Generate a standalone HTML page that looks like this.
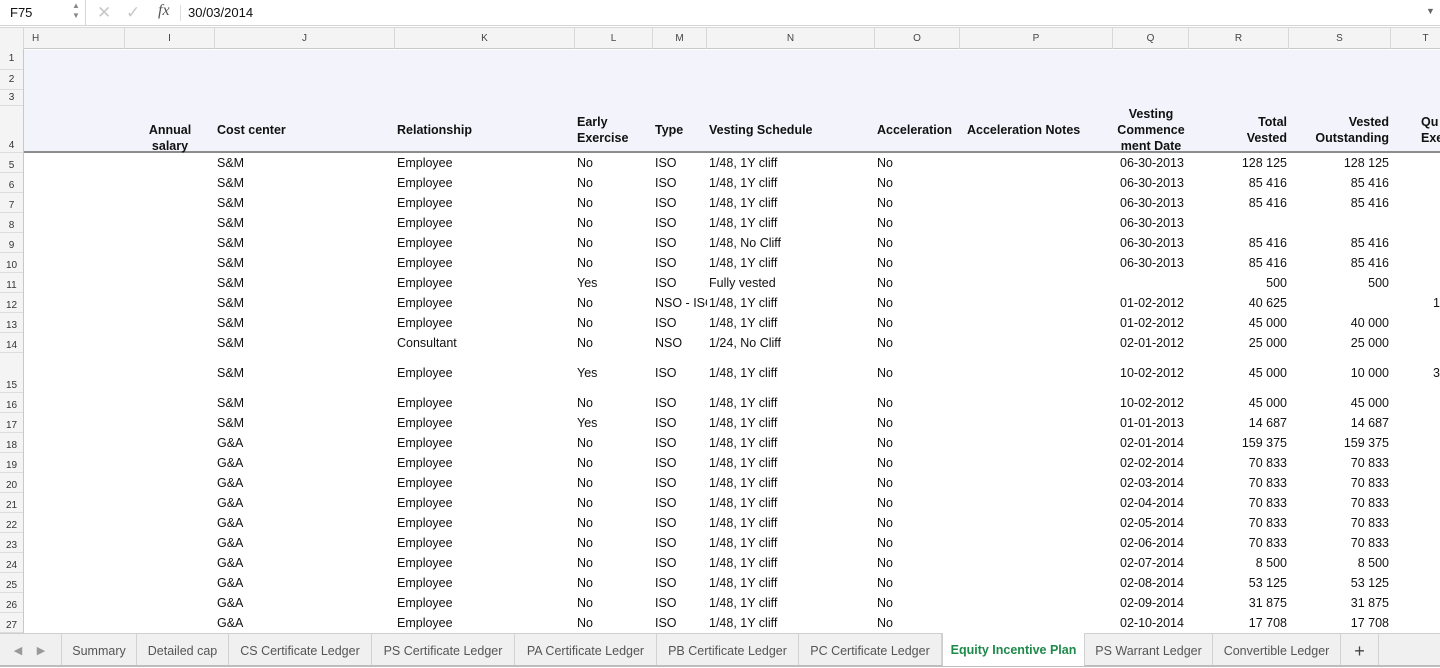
<!DOCTYPE html>
<html><head><meta charset="utf-8"><style>
*{margin:0;padding:0;box-sizing:border-box}
body{width:1440px;height:667px;overflow:hidden;background:#fff;font-family:"Liberation Sans",Arial,sans-serif;font-size:12.5px;color:#111;position:relative}
.a{position:absolute;white-space:nowrap}
#fb{position:absolute;left:0;top:0;width:1440px;height:26px;background:#fff;border-bottom:1px solid #d4d4d4}
#ch{position:absolute;left:0;top:27px;width:1440px;height:22px;background:#f4f4f4;border-bottom:1px solid #c8c8c8;border-top:1px solid #d8d8d8;font-size:10px;color:#444}
#ch span{position:absolute;top:0;height:21px;line-height:21px;text-align:center;border-right:1px solid #d8d8d8}
#rh{position:absolute;left:0;top:49px;width:24px;height:584px;background:#f4f4f4;border-right:1px solid #c8c8c8;font-size:10px;color:#333}
#rh div{position:absolute;left:0;width:23px;text-align:center;border-bottom:1px solid #dcdcdc;padding-bottom:1px;display:flex;align-items:flex-end;justify-content:center}
#hd{position:absolute;left:24px;top:50px;width:1416px;height:103px;background:#f3f3fc;border-bottom:2px solid #8c8c8c;font-weight:bold}
.r{position:absolute;left:0;width:1440px;height:20px;line-height:20px;overflow:hidden}
.r span{position:absolute;top:0;white-space:nowrap}
.J{left:217px}.K{left:397px}.L{left:577px}.M{left:655px;width:52px;overflow:hidden}.N{left:709px}.O{left:877px}.Q{left:1120px}.R{right:153px}.S{right:51px}.T{left:1433px}
#tb{position:absolute;left:0;top:633px;width:1440px;height:34px;background:#f0f0f0;border-top:1px solid #cfcfcf;border-bottom:2px solid #bdbdbd;font-size:12.5px;color:#555}
#tb span{position:absolute;top:0;height:31px;line-height:34px;text-align:center;border-right:1px solid #d2d2d2}
</style></head><body>
<div id="fb">
<div class="a" style="left:0;top:0;width:86px;height:26px;border-right:1px solid #d4d4d4;"></div>
<div class="a" style="left:10px;top:5px;font-size:13px">F75</div>
<div class="a" style="left:72px;top:1px;font-size:8px;color:#888;line-height:10px">▲<br>▼</div>
<div class="a" style="left:97px;top:3px;font-size:17px;color:#c8c8c8">✕</div>
<div class="a" style="left:126px;top:3px;font-size:17px;color:#c8c8c8">✓</div>
<div class="a" style="left:158px;top:2px;font-size:16px;font-style:italic;font-family:'Liberation Serif',serif;color:#555">fx</div>
<div class="a" style="left:180px;top:5px;width:1px;height:16px;background:#ddd"></div>
<div class="a" style="left:188px;top:5px;font-size:13px">30/03/2014</div>
<div class="a" style="left:1426px;top:6px;font-size:9px;color:#666">▼</div>
</div>
<div id="ch">
<span style="left:0;width:24px;background:#f4f4f4"></span>
<span style="left:24px;width:101px;text-align:left;padding-left:8px">H</span>
<span style="left:125px;width:90px">I</span>
<span style="left:215px;width:180px">J</span>
<span style="left:395px;width:180px">K</span>
<span style="left:575px;width:78px">L</span>
<span style="left:653px;width:54px">M</span>
<span style="left:707px;width:168px">N</span>
<span style="left:875px;width:85px">O</span>
<span style="left:960px;width:153px">P</span>
<span style="left:1113px;width:76px">Q</span>
<span style="left:1189px;width:100px">R</span>
<span style="left:1289px;width:102px">S</span>
<span style="left:1391px;width:70px">T</span>
</div>
<div id="hd"></div>
<div class="a" style="left:125px;width:90px;top:122px;text-align:center;font-weight:bold;line-height:16px">Annual<br>salary</div>
<div class="a" style="left:217px;top:122px;font-weight:bold;line-height:16px">Cost center</div>
<div class="a" style="left:397px;top:122px;font-weight:bold;line-height:16px">Relationship</div>
<div class="a" style="left:577px;top:114px;font-weight:bold;line-height:16px">Early<br>Exercise</div>
<div class="a" style="left:655px;top:122px;font-weight:bold;line-height:16px">Type</div>
<div class="a" style="left:709px;top:122px;font-weight:bold;line-height:16px">Vesting Schedule</div>
<div class="a" style="left:877px;top:122px;font-weight:bold;line-height:16px">Acceleration</div>
<div class="a" style="left:967px;top:122px;font-weight:bold;line-height:16px">Acceleration Notes</div>
<div class="a" style="left:1105px;width:92px;top:106px;text-align:center;font-weight:bold;line-height:16px">Vesting<br>Commence<br>ment Date</div>
<div class="a" style="right:153px;top:114px;text-align:right;font-weight:bold;line-height:16px">Total<br>Vested</div>
<div class="a" style="right:51px;top:114px;text-align:right;font-weight:bold;line-height:16px">Vested<br>Outstanding</div>
<div class="a" style="left:1421px;top:114px;font-weight:bold;line-height:16px">Qu<br>Exer</div>

<div id="rh">
<div style="top:0;height:21px;align-items:center">1</div>
<div style="top:21px;height:20px;align-items:center">2</div>
<div style="top:41px;height:16px;align-items:center">3</div>
<div style="top:57px;height:47px">4</div>
<div style="top:104px;height:20px">5</div>
<div style="top:124px;height:20px">6</div>
<div style="top:144px;height:20px">7</div>
<div style="top:164px;height:20px">8</div>
<div style="top:184px;height:20px">9</div>
<div style="top:204px;height:20px">10</div>
<div style="top:224px;height:20px">11</div>
<div style="top:244px;height:20px">12</div>
<div style="top:264px;height:20px">13</div>
<div style="top:284px;height:20px">14</div>
<div style="top:304px;height:40px">15</div>
<div style="top:344px;height:20px">16</div>
<div style="top:364px;height:20px">17</div>
<div style="top:384px;height:20px">18</div>
<div style="top:404px;height:20px">19</div>
<div style="top:424px;height:20px">20</div>
<div style="top:444px;height:20px">21</div>
<div style="top:464px;height:20px">22</div>
<div style="top:484px;height:20px">23</div>
<div style="top:504px;height:20px">24</div>
<div style="top:524px;height:20px">25</div>
<div style="top:544px;height:20px">26</div>
<div style="top:564px;height:20px">27</div>
</div>

<div class="r" style="top:153px"><span class="J">S&amp;M</span><span class="K">Employee</span><span class="L">No</span><span class="M">ISO</span><span class="N">1/48, 1Y cliff</span><span class="O">No</span><span class="Q">06-30-2013</span><span class="R">128 125</span><span class="S">128 125</span></div>
<div class="r" style="top:173px"><span class="J">S&amp;M</span><span class="K">Employee</span><span class="L">No</span><span class="M">ISO</span><span class="N">1/48, 1Y cliff</span><span class="O">No</span><span class="Q">06-30-2013</span><span class="R">85 416</span><span class="S">85 416</span></div>
<div class="r" style="top:193px"><span class="J">S&amp;M</span><span class="K">Employee</span><span class="L">No</span><span class="M">ISO</span><span class="N">1/48, 1Y cliff</span><span class="O">No</span><span class="Q">06-30-2013</span><span class="R">85 416</span><span class="S">85 416</span></div>
<div class="r" style="top:213px"><span class="J">S&amp;M</span><span class="K">Employee</span><span class="L">No</span><span class="M">ISO</span><span class="N">1/48, 1Y cliff</span><span class="O">No</span><span class="Q">06-30-2013</span></div>
<div class="r" style="top:233px"><span class="J">S&amp;M</span><span class="K">Employee</span><span class="L">No</span><span class="M">ISO</span><span class="N">1/48, No Cliff</span><span class="O">No</span><span class="Q">06-30-2013</span><span class="R">85 416</span><span class="S">85 416</span></div>
<div class="r" style="top:253px"><span class="J">S&amp;M</span><span class="K">Employee</span><span class="L">No</span><span class="M">ISO</span><span class="N">1/48, 1Y cliff</span><span class="O">No</span><span class="Q">06-30-2013</span><span class="R">85 416</span><span class="S">85 416</span></div>
<div class="r" style="top:273px"><span class="J">S&amp;M</span><span class="K">Employee</span><span class="L">Yes</span><span class="M">ISO</span><span class="N">Fully vested</span><span class="O">No</span><span class="R">500</span><span class="S">500</span></div>
<div class="r" style="top:293px"><span class="J">S&amp;M</span><span class="K">Employee</span><span class="L">No</span><span class="M">NSO - ISO</span><span class="N">1/48, 1Y cliff</span><span class="O">No</span><span class="Q">01-02-2012</span><span class="R">40 625</span><span class="T">1</span></div>
<div class="r" style="top:313px"><span class="J">S&amp;M</span><span class="K">Employee</span><span class="L">No</span><span class="M">ISO</span><span class="N">1/48, 1Y cliff</span><span class="O">No</span><span class="Q">01-02-2012</span><span class="R">45 000</span><span class="S">40 000</span></div>
<div class="r" style="top:333px"><span class="J">S&amp;M</span><span class="K">Consultant</span><span class="L">No</span><span class="M">NSO</span><span class="N">1/24, No Cliff</span><span class="O">No</span><span class="Q">02-01-2012</span><span class="R">25 000</span><span class="S">25 000</span></div>
<div class="r" style="top:353px;height:40px;line-height:40px"><span class="J">S&amp;M</span><span class="K">Employee</span><span class="L">Yes</span><span class="M">ISO</span><span class="N">1/48, 1Y cliff</span><span class="O">No</span><span class="Q">10-02-2012</span><span class="R">45 000</span><span class="S">10 000</span><span class="T">3</span></div>
<div class="r" style="top:393px"><span class="J">S&amp;M</span><span class="K">Employee</span><span class="L">No</span><span class="M">ISO</span><span class="N">1/48, 1Y cliff</span><span class="O">No</span><span class="Q">10-02-2012</span><span class="R">45 000</span><span class="S">45 000</span></div>
<div class="r" style="top:413px"><span class="J">S&amp;M</span><span class="K">Employee</span><span class="L">Yes</span><span class="M">ISO</span><span class="N">1/48, 1Y cliff</span><span class="O">No</span><span class="Q">01-01-2013</span><span class="R">14 687</span><span class="S">14 687</span></div>
<div class="r" style="top:433px"><span class="J">G&amp;A</span><span class="K">Employee</span><span class="L">No</span><span class="M">ISO</span><span class="N">1/48, 1Y cliff</span><span class="O">No</span><span class="Q">02-01-2014</span><span class="R">159 375</span><span class="S">159 375</span></div>
<div class="r" style="top:453px"><span class="J">G&amp;A</span><span class="K">Employee</span><span class="L">No</span><span class="M">ISO</span><span class="N">1/48, 1Y cliff</span><span class="O">No</span><span class="Q">02-02-2014</span><span class="R">70 833</span><span class="S">70 833</span></div>
<div class="r" style="top:473px"><span class="J">G&amp;A</span><span class="K">Employee</span><span class="L">No</span><span class="M">ISO</span><span class="N">1/48, 1Y cliff</span><span class="O">No</span><span class="Q">02-03-2014</span><span class="R">70 833</span><span class="S">70 833</span></div>
<div class="r" style="top:493px"><span class="J">G&amp;A</span><span class="K">Employee</span><span class="L">No</span><span class="M">ISO</span><span class="N">1/48, 1Y cliff</span><span class="O">No</span><span class="Q">02-04-2014</span><span class="R">70 833</span><span class="S">70 833</span></div>
<div class="r" style="top:513px"><span class="J">G&amp;A</span><span class="K">Employee</span><span class="L">No</span><span class="M">ISO</span><span class="N">1/48, 1Y cliff</span><span class="O">No</span><span class="Q">02-05-2014</span><span class="R">70 833</span><span class="S">70 833</span></div>
<div class="r" style="top:533px"><span class="J">G&amp;A</span><span class="K">Employee</span><span class="L">No</span><span class="M">ISO</span><span class="N">1/48, 1Y cliff</span><span class="O">No</span><span class="Q">02-06-2014</span><span class="R">70 833</span><span class="S">70 833</span></div>
<div class="r" style="top:553px"><span class="J">G&amp;A</span><span class="K">Employee</span><span class="L">No</span><span class="M">ISO</span><span class="N">1/48, 1Y cliff</span><span class="O">No</span><span class="Q">02-07-2014</span><span class="R">8 500</span><span class="S">8 500</span></div>
<div class="r" style="top:573px"><span class="J">G&amp;A</span><span class="K">Employee</span><span class="L">No</span><span class="M">ISO</span><span class="N">1/48, 1Y cliff</span><span class="O">No</span><span class="Q">02-08-2014</span><span class="R">53 125</span><span class="S">53 125</span></div>
<div class="r" style="top:593px"><span class="J">G&amp;A</span><span class="K">Employee</span><span class="L">No</span><span class="M">ISO</span><span class="N">1/48, 1Y cliff</span><span class="O">No</span><span class="Q">02-09-2014</span><span class="R">31 875</span><span class="S">31 875</span></div>
<div class="r" style="top:613px"><span class="J">G&amp;A</span><span class="K">Employee</span><span class="L">No</span><span class="M">ISO</span><span class="N">1/48, 1Y cliff</span><span class="O">No</span><span class="Q">02-10-2014</span><span class="R">17 708</span><span class="S">17 708</span></div>

<div id="tb">
<span style="left:8px;width:20px;border:none;color:#999;font-size:11px">◀</span>
<span style="left:31px;width:20px;border:none;color:#999;font-size:11px">▶</span>
<span style="left:61px;width:1px;border-right:1px solid #d2d2d2"></span>
<span style="left:62px;width:75px">Summary</span>
<span style="left:137px;width:92px">Detailed cap</span>
<span style="left:229px;width:143px">CS Certificate Ledger</span>
<span style="left:372px;width:143px">PS Certificate Ledger</span>
<span style="left:515px;width:142px">PA Certificate Ledger</span>
<span style="left:657px;width:142px">PB Certificate Ledger</span>
<span style="left:799px;width:143px">PC Certificate Ledger</span>
<span style="left:942px;width:143px;background:#fff;color:#1e8a4a;font-weight:bold;height:33px;top:-1px;line-height:35px;border-left:1px solid #cfcfcf">Equity Incentive Plan</span>
<span style="left:1085px;width:128px">PS Warrant Ledger</span>
<span style="left:1213px;width:128px">Convertible Ledger</span>
<span style="left:1341px;width:38px;font-size:18px;color:#444">+</span>
</div>
</body></html>
